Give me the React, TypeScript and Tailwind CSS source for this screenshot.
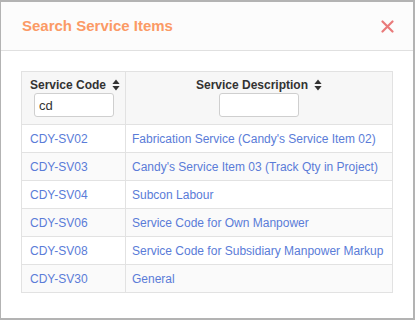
import React from 'react';

const rows = [
  { code: 'CDY-SV02', desc: "Fabrication Service (Candy's Service Item 02)" },
  { code: 'CDY-SV03', desc: "Candy's Service Item 03 (Track Qty in Project)" },
  { code: 'CDY-SV04', desc: 'Subcon Labour' },
  { code: 'CDY-SV06', desc: 'Service Code for Own Manpower' },
  { code: 'CDY-SV08', desc: 'Service Code for Subsidiary Manpower Markup' },
  { code: 'CDY-SV30', desc: 'General' },
];

const SortIcon = () => (
  <svg width="8" height="12" viewBox="0 0 8 12" className="inline-block ml-[6px] -mt-[2px] align-middle">
    <path d="M4 0.5 L7.6 5 L0.4 5 Z" fill="#333" />
    <path d="M4 11.5 L7.6 7 L0.4 7 Z" fill="#333" />
  </svg>
);

export default function App() {
  return (
    <div
      className="w-[415px] h-[320px] bg-[#b3b3b3] pt-[2px] pl-[1px] overflow-hidden"
      style={{ fontFamily: '"Liberation Sans", Arial, sans-serif' }}
    >
      <div className="w-[412px] h-[316px] bg-white">
        <div className="h-[49px] bg-[#fcfcfc] border-b border-[#e0e0e0] flex items-center justify-between pl-[21px] pr-[19px]">
          <h4 className="text-[15px] font-bold text-[#fb9a66] mt-[1px]">Search Service Items</h4>
          <svg width="13" height="13" viewBox="0 0 13 13">
            <path d="M1.5 1.5 L11.5 11.5 M11.5 1.5 L1.5 11.5" stroke="#e97a7a" strokeWidth="2.2" strokeLinecap="round" />
          </svg>
        </div>
        <div className="px-[20px] pt-[20px]">
          <table className="w-[372px] border-collapse text-[12px] table-fixed">
            <thead>
              <tr className="bg-[#f7f7f7]">
                <th className="w-[104px] h-[53px] border border-[#e2e2e2] pl-[8px] pr-0 pt-[5px] text-left align-top font-bold text-[#333] whitespace-nowrap">
                  <div className="leading-[16px]">
                    Service Code
                    <SortIcon />
                  </div>
                  <input
                    defaultValue="cd"
                    className="ml-[4px] w-[80px] h-[24px] bg-white border border-[#cfcfcf] rounded-[3px] px-[4px] text-[13px] font-normal text-[#333] outline-none"
                  />
                </th>
                <th className="h-[53px] border border-[#e2e2e2] px-[8px] pt-[5px] text-center align-top font-bold text-[#333] whitespace-nowrap">
                  <div className="leading-[16px]">
                    Service Description
                    <SortIcon />
                  </div>
                  <input className="w-[80px] h-[24px] bg-white border border-[#cfcfcf] rounded-[3px] px-[4px] text-[13px] font-normal outline-none" />
                </th>
              </tr>
            </thead>
            <tbody>
              {rows.map((r, i) => (
                <tr key={r.code} className={i % 2 === 0 ? 'bg-white' : 'bg-[#fafafa]'}>
                  <td className="h-[28px] border border-[#e2e2e2] px-[8px] text-[#5a7cd8]">{r.code}</td>
                  <td className="h-[28px] border border-[#e2e2e2] px-[6px] text-[#5a7cd8] whitespace-nowrap">{r.desc}</td>
                </tr>
              ))}
            </tbody>
          </table>
        </div>
      </div>
    </div>
  );
}
